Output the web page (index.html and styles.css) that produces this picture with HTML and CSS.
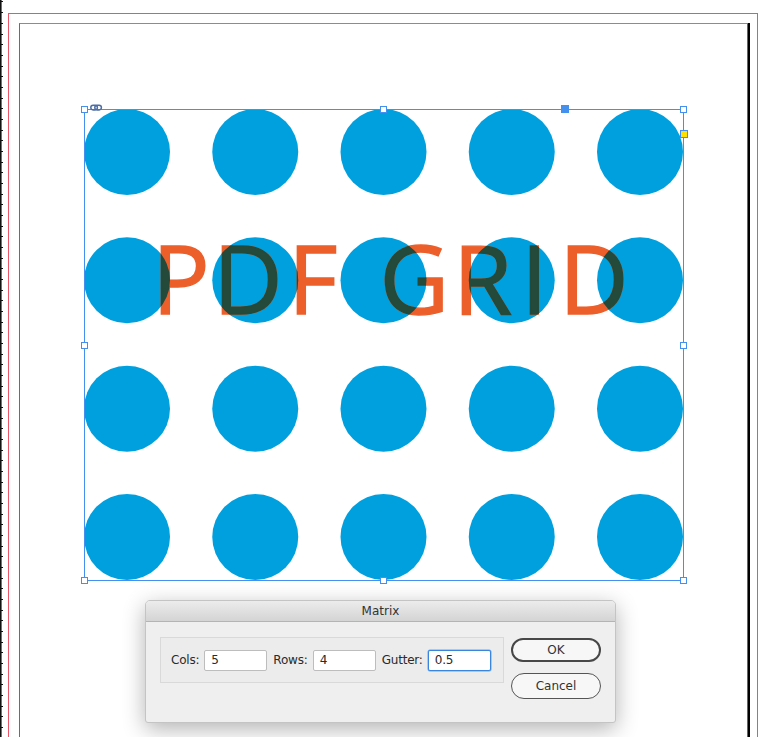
FILE: index.html
```html
<!DOCTYPE html>
<html>
<head>
<meta charset="utf-8">
<link rel="stylesheet" href="styles.css">
</head>
<body>
<div class="app">
  <div class="ruler"></div>
  <div class="pasteboard">
    <div class="bleed">
      <div class="page">
        <svg class="canvas" width="727" height="713" viewBox="20 24 727 713" xmlns="http://www.w3.org/2000/svg">
          <defs>
            <clipPath id="dots">
              <circle cx="127" cy="152" r="43"/><circle cx="255.25" cy="152" r="43"/><circle cx="383.5" cy="152" r="43"/><circle cx="511.75" cy="152" r="43"/><circle cx="640" cy="152" r="43"/>
              <circle cx="127" cy="280.3" r="43"/><circle cx="255.25" cy="280.3" r="43"/><circle cx="383.5" cy="280.3" r="43"/><circle cx="511.75" cy="280.3" r="43"/><circle cx="640" cy="280.3" r="43"/>
            </clipPath>
          </defs>
          <g class="dots">
            <circle cx="127" cy="152" r="43"/><circle cx="255.25" cy="152" r="43"/><circle cx="383.5" cy="152" r="43"/><circle cx="511.75" cy="152" r="43"/><circle cx="640" cy="152" r="43"/>
            <circle cx="127" cy="280.3" r="43"/><circle cx="255.25" cy="280.3" r="43"/><circle cx="383.5" cy="280.3" r="43"/><circle cx="511.75" cy="280.3" r="43"/><circle cx="640" cy="280.3" r="43"/>
            <circle cx="127" cy="408.7" r="43"/><circle cx="255.25" cy="408.7" r="43"/><circle cx="383.5" cy="408.7" r="43"/><circle cx="511.75" cy="408.7" r="43"/><circle cx="640" cy="408.7" r="43"/>
            <circle cx="127" cy="537" r="43"/><circle cx="255.25" cy="537" r="43"/><circle cx="383.5" cy="537" r="43"/><circle cx="511.75" cy="537" r="43"/><circle cx="640" cy="537" r="43"/>
          </g>
          <text class="title" x="152 213 288 379.5 453 521 559" y="314">PDFGRID</text>
          <text class="title dark" clip-path="url(#dots)" x="152 213 288 379.5 453 521 559" y="314">PDFGRID</text>
          <rect class="frame" x="84.5" y="109.5" width="599" height="471"/>
          <g class="handle">
            <rect x="81.5" y="106.5" width="6" height="6"/>
            <rect x="380.5" y="106.5" width="6" height="6"/>
            <rect x="680.5" y="106.5" width="6" height="6"/>
            <rect x="81.5" y="342.5" width="6" height="6"/>
            <rect x="680.5" y="342.5" width="6" height="6"/>
            <rect x="81.5" y="577.5" width="6" height="6"/>
            <rect x="380.5" y="577.5" width="6" height="6"/>
            <rect x="680.5" y="577.5" width="6" height="6"/>
          </g>
          <rect class="center-pt" x="561" y="105" width="8" height="8"/>
          <rect class="yellow" x="680.5" y="130.5" width="7" height="7"/>
          <g class="link">
            <rect x="90.8" y="105.3" width="6.6" height="4.6" rx="2.3"/>
            <rect x="94.8" y="105.3" width="6.6" height="4.6" rx="2.3"/>
          </g>
        </svg>
      </div>
    </div>
  </div>

  <div class="dialog">
    <div class="titlebar">Matrix</div>
    <div class="dlg-body">
      <div class="group">
        <span class="lbl">Cols:</span><span class="field">5</span>
        <span class="lbl">Rows:</span><span class="field">4</span>
        <span class="lbl">Gutter:</span><span class="field focus">0.5</span>
      </div>
      <div class="buttons">
        <div class="btn default">OK</div>
        <div class="btn">Cancel</div>
      </div>
    </div>
  </div>
</div>
</body>
</html>
```

FILE: styles.css
```css
html, body {
  margin: 0;
  padding: 0;
  background: #ffffff;
}

.app {
  position: relative;
  display: flex;
  width: 759px;
  height: 737px;
  overflow: hidden;
  background: #ffffff;
}

.ruler {
  width: 3px;
  flex: none;
  background:
    linear-gradient(#111, #111) 0 0 / 1.6px 100% no-repeat,
    repeating-linear-gradient(to bottom, transparent 0, transparent 1.5px, #111 1.5px, #111 2.5px, transparent 2.5px, transparent 10.67px);
}

.pasteboard {
  flex: 1;
  padding: 13px 0 0 5px;
}

.bleed {
  box-sizing: border-box;
  width: 750px;
  height: 760px;
  border: 1.3px solid #ee5468;
  border-bottom: none;
  padding: 9px 0 0 10px;
}

.page {
  box-sizing: border-box;
  width: 729px;
  height: 740px;
  border-top: 1px solid #e24fe6;
  border-left: 1px solid #9a3fe4;
  border-right: 1px solid #8a3ae0;
  box-shadow: 2px 0 0 #000;
}

.canvas {
  display: block;
}

.dots circle {
  fill: #00a0df;
}

.title {
  font-family: "Open Sans", "Noto Sans", sans-serif;
  font-size: 96px;
  fill: #ec5f2b;
  stroke: #ec5f2b;
  stroke-width: 1.4px;
}

.title.dark {
  fill: #234a3a;
  stroke: #234a3a;
}

.frame {
  fill: none;
  stroke: #4490ef;
  stroke-width: 1;
}

.handle rect {
  fill: #ffffff;
  stroke: #4490ef;
  stroke-width: 1;
}

.center-pt {
  fill: #4490ef;
}

.yellow {
  fill: #ffe000;
  stroke: #4490ef;
  stroke-width: 1;
}

.link rect {
  fill: none;
  stroke: #4e6fa6;
  stroke-width: 1.5;
}

.dialog {
  position: absolute;
  left: 145px;
  top: 600px;
  box-sizing: border-box;
  width: 471px;
  height: 123px;
  background: #efefef;
  border: 1px solid #c4c4c4;
  border-radius: 5px 5px 3px 3px;
  box-shadow: 0 6px 22px rgba(0, 0, 0, 0.3);
  font-family: "DejaVu Sans", "Liberation Sans", sans-serif;
  color: #2a2a2a;
  overflow: hidden;
}

.titlebar {
  box-sizing: border-box;
  height: 21px;
  background: linear-gradient(#ececec, #d4d4d4);
  border-bottom: 1px solid #b4b4b4;
  text-align: center;
  font-size: 12px;
  line-height: 21px;
  color: #333;
}

.dlg-body {
  display: flex;
  align-items: flex-start;
  gap: 7px;
  padding: 15px 14px 0 14px;
}

.group {
  box-sizing: border-box;
  width: 345px;
  height: 46px;
  background: #ececec;
  border: 1px solid #d9d9d9;
  display: flex;
  align-items: center;
  padding-left: 10px;
  font-size: 12px;
  letter-spacing: -0.2px;
}

.lbl {
  margin-right: 5px;
}

.field {
  box-sizing: border-box;
  width: 63px;
  height: 21px;
  background: #fff;
  border: 1px solid #bdbdbd;
  border-radius: 2px;
  padding-left: 6px;
  line-height: 19px;
  margin-right: 6px;
}

.field.focus {
  border: 1px solid #3a86df;
  box-shadow: 0 0 0 0.5px #6aa6ee;
}

.buttons {
  display: flex;
  flex-direction: column;
  gap: 11px;
  padding-top: 1px;
}

.btn {
  box-sizing: border-box;
  width: 90px;
  height: 26px;
  border: 1px solid #555;
  border-radius: 13px;
  background: #f7f7f7;
  text-align: center;
  font-size: 12px;
  line-height: 24px;
  color: #333;
}

.btn.default {
  height: 24px;
  border: 2px solid #474747;
  line-height: 20px;
}
```
